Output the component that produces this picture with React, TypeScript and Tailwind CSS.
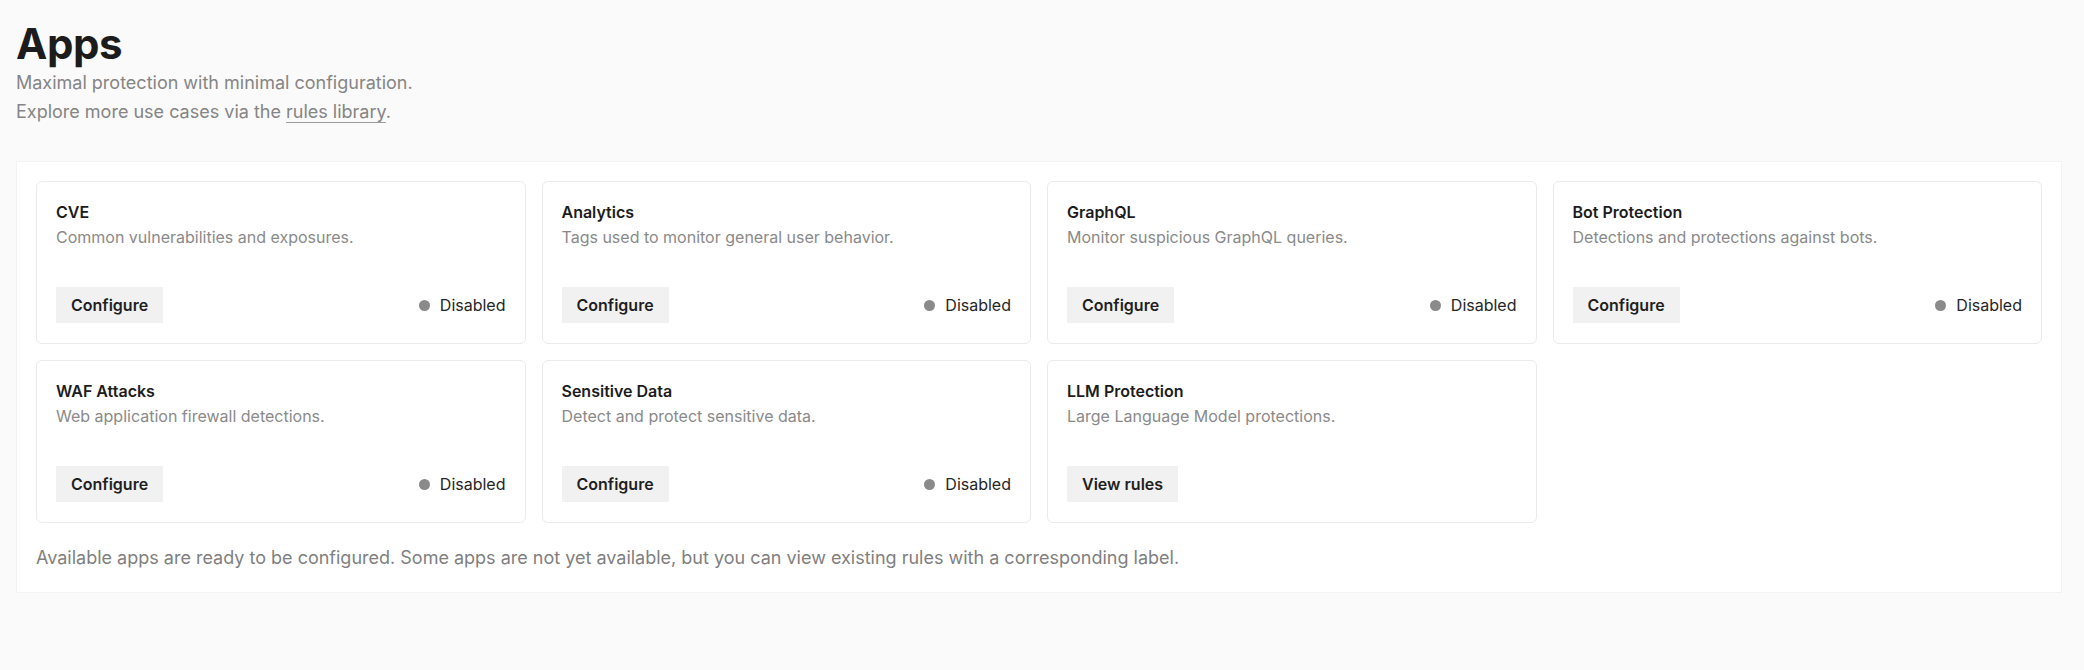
import React from "react";

type App = {
  name: string;
  desc: string;
  action: "configure" | "view";
};

const APPS: App[] = [
  { name: "CVE", desc: "Common vulnerabilities and exposures.", action: "configure" },
  { name: "Analytics", desc: "Tags used to monitor general user behavior.", action: "configure" },
  { name: "GraphQL", desc: "Monitor suspicious GraphQL queries.", action: "configure" },
  { name: "Bot Protection", desc: "Detections and protections against bots.", action: "configure" },
  { name: "WAF Attacks", desc: "Web application firewall detections.", action: "configure" },
  { name: "Sensitive Data", desc: "Detect and protect sensitive data.", action: "configure" },
  { name: "LLM Protection", desc: "Large Language Model protections.", action: "view" },
];

function AppCard({ app }: { app: App }) {
  return (
    <div className="flex flex-col rounded-md border border-[#ebebeb] bg-white px-[19px] pt-5 pb-5">
      <h3 className="text-base leading-5 font-semibold text-[#1c1c1c]">{app.name}</h3>
      <p className="mt-[5px] text-base leading-5 text-[#8a8a8a]">{app.desc}</p>
      <div className="mt-10 flex items-center justify-between">
        <button className="h-9 bg-[#f1f1f1] px-[15px] text-base font-semibold text-[#1f1f1f]">
          {app.action === "configure" ? "Configure" : "View rules"}
        </button>
        {app.action === "configure" && (
          <div className="flex items-center gap-[10px]">
            <span className="size-[11px] rounded-full bg-[#8a8a8a]" />
            <span className="text-base text-[#262626]">Disabled</span>
          </div>
        )}
      </div>
    </div>
  );
}

export default function App() {
  return (
    <div
      className="min-h-screen bg-[#fafafa] pt-5 pr-[22px] pl-4"
      style={{ fontFamily: "Inter, 'Noto Sans', sans-serif" }}
    >
      <h1 className="text-[42px] leading-[48px] font-bold tracking-[-0.01em] text-[#1c1c1c]">Apps</h1>
      <p className="text-lg leading-[29px] text-[#858585]">
        Maximal protection with minimal configuration.
        <br />
        Explore more use cases via the{" "}
        <a className="underline decoration-[#9a9a9a] underline-offset-[4px]">rules library</a>.
      </p>

      {/* Apps panel */}
      <div className="mt-[35px] border border-[#f3f3f3] bg-white px-[19px] pt-[19px] pb-5">
        <div className="grid grid-cols-4 gap-4">
          {APPS.map((app) => (
            <AppCard key={app.name} app={app} />
          ))}
        </div>
        <p className="mt-[21px] text-lg leading-7 text-[#7f7f7f]">
          Available apps are ready to be configured. Some apps are not yet available, but you can view existing rules with a corresponding label.
        </p>
      </div>
    </div>
  );
}
